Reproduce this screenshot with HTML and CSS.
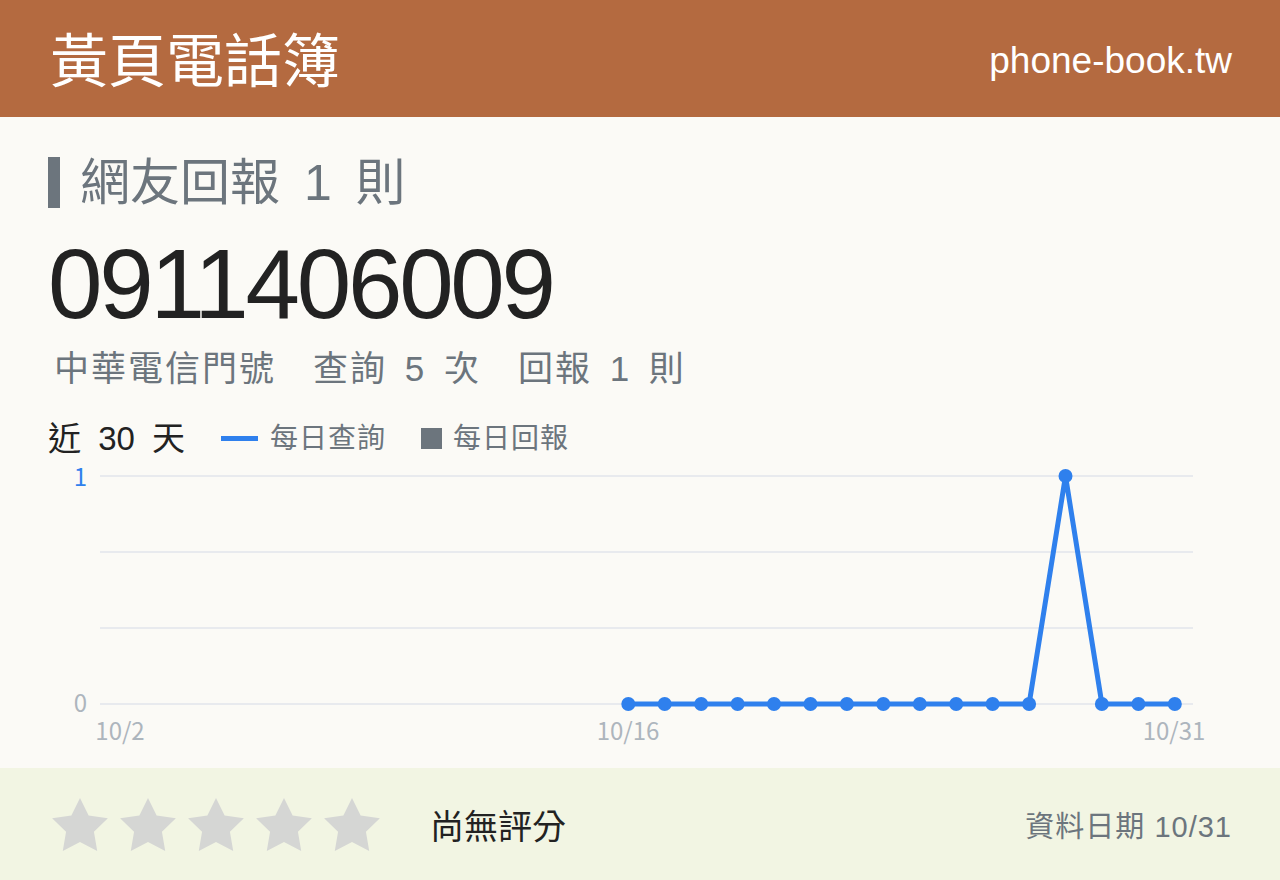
FILE: index.html
```html
<!DOCTYPE html>
<html lang="zh-Hant">
<head>
<meta charset="utf-8">
<title>0911406009 - 黃頁電話簿</title>
<link rel="stylesheet" href="styles.css">
</head>
<body>
<header class="topbar">
  <h1 class="brand">黃頁電話簿</h1>
  <span class="site">phone-book.tw</span>
</header>

<main class="content">
  <h2 class="report-title">網友回報 1 則</h2>
  <div class="number">0911406009</div>
  <p class="meta">中華電信門號　查詢 5 次　回報 1 則</p>

  <div class="trend-head">
    <span class="range">近 30 天</span>
    <span class="legend legend-query">每日查詢</span>
    <span class="legend legend-report">每日回報</span>
  </div>

  <svg class="trend" width="1184" height="313" viewBox="48 455 1184 313" aria-label="近 30 天查詢次數">
    <g class="grid">
      <line x1="100" y1="476" x2="1193" y2="476"/>
      <line x1="100" y1="552" x2="1193" y2="552"/>
      <line x1="100" y1="628" x2="1193" y2="628"/>
      <line x1="100" y1="704" x2="1193" y2="704"/>
    </g>
    <text class="y-max" x="87" y="486">1</text>
    <text class="y-min" x="87" y="712">0</text>
    <g class="x-labels">
      <text x="120" y="740">10/2</text>
      <text x="628" y="740">10/16</text>
      <text x="1174" y="740">10/31</text>
    </g>
    <polyline class="series"
      points="628.3,704 664.7,704 701.2,704 737.6,704 774,704 810.5,704 846.9,704 883.3,704 919.8,704 956.2,704 992.6,704 1029.1,704 1065.5,476 1101.9,704 1138.4,704 1174.8,704"/>
    <g class="dots">
      <circle cx="628.3" cy="704" r="7"/>
      <circle cx="664.7" cy="704" r="7"/>
      <circle cx="701.2" cy="704" r="7"/>
      <circle cx="737.6" cy="704" r="7"/>
      <circle cx="774" cy="704" r="7"/>
      <circle cx="810.5" cy="704" r="7"/>
      <circle cx="846.9" cy="704" r="7"/>
      <circle cx="883.3" cy="704" r="7"/>
      <circle cx="919.8" cy="704" r="7"/>
      <circle cx="956.2" cy="704" r="7"/>
      <circle cx="992.6" cy="704" r="7"/>
      <circle cx="1029.1" cy="704" r="7"/>
      <circle cx="1065.5" cy="476" r="7"/>
      <circle cx="1101.9" cy="704" r="7"/>
      <circle cx="1138.4" cy="704" r="7"/>
      <circle cx="1174.8" cy="704" r="7"/>
    </g>
  </svg>
</main>

<footer class="rating-bar">
  <div class="stars">
    <svg class="star" viewBox="2 2 20 19.02"><path d="M12 2l3.09 6.26L22 9.27l-5 4.87 1.18 6.88L12 17.77l-6.18 3.25L7 14.14 2 9.27l6.91-1.01L12 2z"/></svg>
    <svg class="star" viewBox="2 2 20 19.02"><path d="M12 2l3.09 6.26L22 9.27l-5 4.87 1.18 6.88L12 17.77l-6.18 3.25L7 14.14 2 9.27l6.91-1.01L12 2z"/></svg>
    <svg class="star" viewBox="2 2 20 19.02"><path d="M12 2l3.09 6.26L22 9.27l-5 4.87 1.18 6.88L12 17.77l-6.18 3.25L7 14.14 2 9.27l6.91-1.01L12 2z"/></svg>
    <svg class="star" viewBox="2 2 20 19.02"><path d="M12 2l3.09 6.26L22 9.27l-5 4.87 1.18 6.88L12 17.77l-6.18 3.25L7 14.14 2 9.27l6.91-1.01L12 2z"/></svg>
    <svg class="star" viewBox="2 2 20 19.02"><path d="M12 2l3.09 6.26L22 9.27l-5 4.87 1.18 6.88L12 17.77l-6.18 3.25L7 14.14 2 9.27l6.91-1.01L12 2z"/></svg>
  </div>
  <span class="no-rating">尚無評分</span>
  <span class="data-date">資料日期 10/31</span>
</footer>
</body>
</html>
```

FILE: styles.css
```css
* {
  box-sizing: border-box;
}

html,
body {
  margin: 0;
  padding: 0;
}

body {
  width: 1280px;
  height: 880px;
  overflow: hidden;
  background: #fbfaf6;
  color: #222;
  font-family: "Liberation Sans", "Noto Sans CJK TC", sans-serif;
}

/* top bar */
.topbar {
  height: 117px;
  background: #b46a40;
  color: #fff;
  display: flex;
  align-items: center;
  justify-content: space-between;
  padding: 0 48px 0 50px;
}

.brand {
  margin: 0 0 3px;
  font-family: "Noto Sans CJK TC", sans-serif;
  font-weight: 400;
  font-size: 58px;
  line-height: 1;
}

.site {
  font-size: 37px;
  line-height: 1;
  padding-top: 4px;
}

/* number block */
.content {
  padding: 0 48px;
}

.report-title {
  margin: 40px 0 0;
  display: flex;
  align-items: center;
  height: 51px;
  font-weight: 400;
  font-size: 50px;
  line-height: 1;
  color: #6c757d;
  word-spacing: 10px;
}

.report-title::before {
  content: "";
  width: 12px;
  height: 51px;
  background: #6c757d;
  margin-right: 20px;
  flex: none;
}

.number {
  margin-top: 26px;
  font-size: 98px;
  line-height: 100px;
  letter-spacing: -3.3px;
  color: #222;
}

.meta {
  margin: 17px 0 0 6px;
  font-size: 35px;
  line-height: 1;
  letter-spacing: 2px;
  word-spacing: 6px;
  color: #6c757d;
}

/* chart header with legend */
.trend-head {
  margin-top: 36px;
  display: flex;
  align-items: center;
  line-height: 1;
}

.range {
  font-size: 33px;
  word-spacing: 8px;
  color: #222;
}

.legend {
  display: flex;
  align-items: center;
  font-size: 28px;
  color: #6c757d;
  letter-spacing: 1px;
}

.legend::before {
  content: "";
  flex: none;
}

.legend-query {
  margin-left: 36px;
}

.legend-query::before {
  width: 37px;
  height: 5px;
  background: #2f80ed;
  margin-right: 12px;
}

.legend-report {
  margin-left: 35px;
}

.legend-report::before {
  width: 21px;
  height: 21px;
  background: #6c757d;
  margin-right: 11px;
}

/* chart */
.trend {
  display: block;
  margin-top: 0;
  overflow: visible;
}

.grid line {
  stroke: #e8eaee;
  stroke-width: 2;
}

.trend text {
  font-family: "Noto Sans CJK JP", sans-serif;
  font-size: 24px;
  fill: #adb5bd;
}

.trend .y-max,
.trend .y-min {
  text-anchor: end;
}

.trend .y-max {
  fill: #2f80ed;
}

.x-labels text {
  text-anchor: middle;
}

.series {
  fill: none;
  stroke: #2f80ed;
  stroke-width: 5;
  stroke-linejoin: round;
}

.dots circle {
  fill: #2f80ed;
}

/* rating footer */
.rating-bar {
  height: 112px;
  background: #f2f5e3;
  display: flex;
  align-items: center;
  padding: 0 48px 0 52px;
}

.stars {
  display: flex;
  gap: 12px;
}

.star {
  width: 56px;
  height: 53px;
  fill: #d5d6d4;
}

.no-rating {
  margin-left: 50px;
  font-family: "Noto Sans CJK TC", sans-serif;
  font-size: 34px;
  color: #222;
}

.data-date {
  margin-left: auto;
  font-size: 29px;
  letter-spacing: 1px;
  color: #6c757d;
}
```
